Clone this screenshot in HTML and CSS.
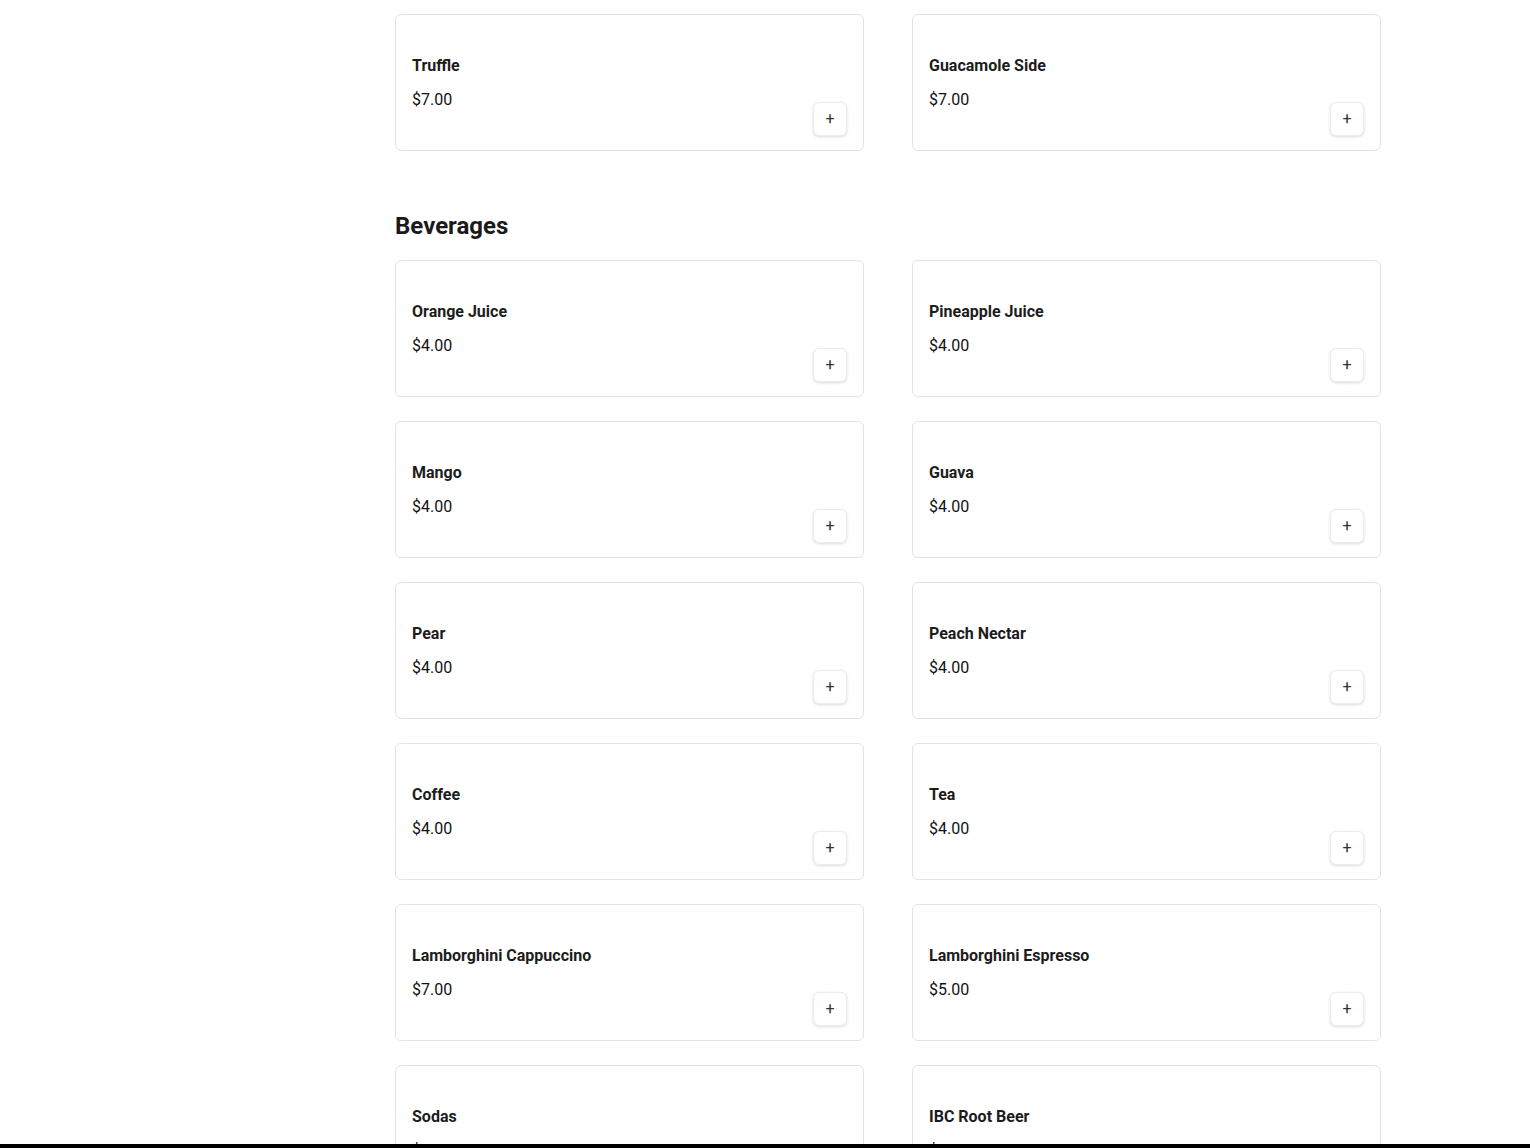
FILE: index.html
```html
<!DOCTYPE html>
<html lang="en">
<head>
<meta charset="utf-8">
<title>Menu</title>
<link rel="stylesheet" href="styles.css">
</head>
<body>
<div class="layout">
  <aside class="side"></aside>
  <main class="menu">
    <section class="section">
      <div class="grid">
        <div class="card"><div class="info"><div class="name">Truffle</div><div class="price">$7.00</div></div><button class="add" aria-label="Add">+</button></div>
        <div class="card"><div class="info"><div class="name">Guacamole Side</div><div class="price">$7.00</div></div><button class="add" aria-label="Add">+</button></div>
      </div>
    </section>
    <section class="section">
      <h2 class="section-title">Beverages</h2>
      <div class="grid">
        <div class="card"><div class="info"><div class="name">Orange Juice</div><div class="price">$4.00</div></div><button class="add" aria-label="Add">+</button></div>
        <div class="card"><div class="info"><div class="name">Pineapple Juice</div><div class="price">$4.00</div></div><button class="add" aria-label="Add">+</button></div>
        <div class="card"><div class="info"><div class="name">Mango</div><div class="price">$4.00</div></div><button class="add" aria-label="Add">+</button></div>
        <div class="card"><div class="info"><div class="name">Guava</div><div class="price">$4.00</div></div><button class="add" aria-label="Add">+</button></div>
        <div class="card"><div class="info"><div class="name">Pear</div><div class="price">$4.00</div></div><button class="add" aria-label="Add">+</button></div>
        <div class="card"><div class="info"><div class="name">Peach Nectar</div><div class="price">$4.00</div></div><button class="add" aria-label="Add">+</button></div>
        <div class="card"><div class="info"><div class="name">Coffee</div><div class="price">$4.00</div></div><button class="add" aria-label="Add">+</button></div>
        <div class="card"><div class="info"><div class="name">Tea</div><div class="price">$4.00</div></div><button class="add" aria-label="Add">+</button></div>
        <div class="card"><div class="info"><div class="name">Lamborghini Cappuccino</div><div class="price">$7.00</div></div><button class="add" aria-label="Add">+</button></div>
        <div class="card"><div class="info"><div class="name">Lamborghini Espresso</div><div class="price">$5.00</div></div><button class="add" aria-label="Add">+</button></div>
        <div class="card"><div class="info"><div class="name">Sodas</div><div class="price">$3.00</div></div><button class="add" aria-label="Add">+</button></div>
        <div class="card"><div class="info"><div class="name">IBC Root Beer</div><div class="price">$4.00</div></div><button class="add" aria-label="Add">+</button></div>
      </div>
    </section>
  </main>
</div>
<div class="bottom-bar"></div>
</body>
</html>
```

FILE: styles.css
```css
* { box-sizing: border-box; }
html, body { margin: 0; padding: 0; background: #fff; }
body {
  font-family: Roboto, "Liberation Sans", Arial, sans-serif;
  color: #1a1a1a;
  overflow: hidden;
  height: 1148px;
}
.layout {
  display: flex;
}
.side {
  width: 395px;
  flex: none;
}
.menu {
  width: 986px;
  flex: none;
  padding-top: 14px;
}
.section-title {
  margin: 59px 0 18px;
  font-size: 24px;
  line-height: 32px;
  font-weight: 700;
  color: #1a1a1a;
}
.grid {
  display: grid;
  grid-template-columns: 469px 469px;
  column-gap: 48px;
  row-gap: 24px;
}
.card {
  height: 137px;
  border: 1px solid #e3e3e3;
  border-radius: 6px;
  padding: 16px;
  display: flex;
  justify-content: space-between;
  align-items: center;
  background: #fff;
}
.info {
  display: flex;
  flex-direction: column;
  gap: 10px;
  margin-top: 1px;
}
.name {
  font-size: 16px;
  line-height: 24px;
  font-weight: 700;
  color: #1c1c1c;
}
.price {
  font-size: 16px;
  line-height: 24px;
  font-weight: 400;
  color: #111;
}
.add {
  align-self: flex-end;
  width: 34px;
  height: 34px;
  margin-bottom: -2px;
  border: 1px solid #ececec;
  border-radius: 6px;
  background: #fff;
  box-shadow: 0 1px 3px rgba(0,0,0,0.14);
  font-family: Roboto, "Liberation Sans", Arial, sans-serif;
  font-size: 16px;
  font-weight: 400;
  line-height: 1;
  color: #333;
  padding: 0;
  display: flex;
  align-items: center;
  justify-content: center;
}
.bottom-bar {
  position: fixed;
  left: 0;
  right: 0;
  bottom: 0;
  height: 4px;
  background: #000;
}
```
